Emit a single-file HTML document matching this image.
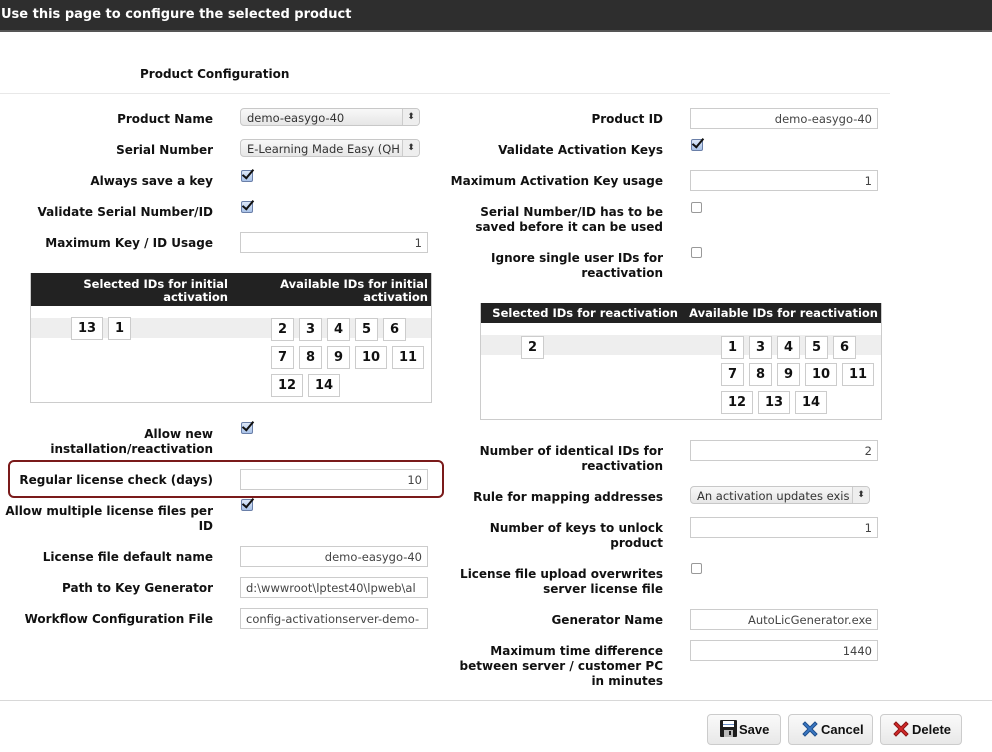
<!DOCTYPE html>
<html><head><meta charset="utf-8"><style>
*{box-sizing:border-box;margin:0;padding:0}
body{width:992px;height:752px;background:#fff;font-family:"DejaVu Sans","Liberation Sans",sans-serif;font-weight:bold;font-size:12px;color:#111;position:relative;overflow:hidden}
.a{position:absolute}
.hd{left:0;top:0;width:992px;height:32px;background:#2e2e2e;border-bottom:2px solid #555;color:#fff;font-size:13px;padding:7px 0 0 1px}
.l{text-align:right;line-height:15px;font-size:12px;margin-top:1px}
.in{position:absolute;height:21px;border:1px solid #ccc;background:#fff;font-weight:normal;font-size:11.5px;color:#444;text-align:right;padding:3px 5px;white-space:nowrap;overflow:hidden}
.sel{position:absolute;height:18px;border:1px solid #c8c8c8;border-radius:4px;background:linear-gradient(#f8f8f8,#e6e6e6);font-weight:normal;font-size:11.5px;color:#333;padding:2px 6px;white-space:nowrap;overflow:hidden}
.sel:after{content:"⬍";position:absolute;right:0;top:0;width:16px;height:16px;border-left:1px solid #ccc;font-size:9px;text-align:center;line-height:16px;background:#eee}
.cb{position:absolute;width:11px;height:11px;border:1px solid #999;border-radius:2px;background:#fff}
.ck{position:absolute;width:12px;height:12px;border:1px solid #6a7fa8;border-radius:2px;background:linear-gradient(#dde8f8,#a9c2e8)}
.ck:after{content:"";position:absolute;left:3px;top:-4px;width:4px;height:10px;border:solid #111;border-width:0 2px 2px 0;transform:rotate(40deg)}
.tb{position:absolute;border:1px solid #ccc;background:#fff}
.th{position:absolute;background:#222;color:#fff;font-size:11.5px;line-height:13px;text-align:right}
.rw{position:absolute;background:#eee}
.c{position:absolute;height:23px;border:1px solid #ccc;background:#fff;font-size:13px;text-align:center;line-height:21px}
.btn{position:absolute;top:714px;height:31px;border:1px solid #ccc;border-radius:4px;background:linear-gradient(#fafafa,#e8e8e8);font-family:"Liberation Sans",sans-serif;font-size:13px;padding-top:7px}
</style></head><body>
<div class="a hd">Use this page to configure the selected product</div>
<div class="a" style="left:140px;top:67px;font-size:12px">Product Configuration</div>
<div class="a" style="left:0;top:93px;width:890px;height:1px;background:#e8e8e8"></div>

<div class="a l" style="right:779px;top:111px">Product Name</div>
<div class="sel" style="left:240px;top:108px;width:180px">demo-easygo-40</div>
<div class="a l" style="right:779px;top:142px">Serial Number</div>
<div class="sel" style="left:240px;top:139px;width:180px">E-Learning Made Easy (QH</div>
<div class="a l" style="right:779px;top:173px">Always save a key</div>
<div class="ck" style="left:241px;top:170px"></div>
<div class="a l" style="right:779px;top:204px">Validate Serial Number/ID</div>
<div class="ck" style="left:241px;top:201px"></div>
<div class="a l" style="right:779px;top:235px">Maximum Key / ID Usage</div>
<div class="in" style="left:240px;top:232px;width:188px">1</div>

<div class="tb" style="left:30px;top:273px;width:402px;height:130px"></div>
<div class="th" style="left:31px;top:273px;width:400px;height:33px"></div>
<div class="th" style="left:60px;top:278px;width:168px">Selected IDs for initial<br>activation</div>
<div class="th" style="left:260px;top:278px;width:168px">Available IDs for initial<br>activation</div>
<div class="rw" style="left:31px;top:318px;width:400px;height:20px"></div>
<div class="c" style="left:71px;top:317px;width:32px">13</div>
<div class="c" style="left:108px;top:317px;width:23px">1</div>
<div class="c" style="left:271px;top:318px;width:23px">2</div>
<div class="c" style="left:299px;top:318px;width:23px">3</div>
<div class="c" style="left:327px;top:318px;width:23px">4</div>
<div class="c" style="left:355px;top:318px;width:23px">5</div>
<div class="c" style="left:383px;top:318px;width:23px">6</div>
<div class="c" style="left:271px;top:346px;width:23px">7</div>
<div class="c" style="left:299px;top:346px;width:23px">8</div>
<div class="c" style="left:327px;top:346px;width:23px">9</div>
<div class="c" style="left:355px;top:346px;width:32px">10</div>
<div class="c" style="left:392px;top:346px;width:32px">11</div>
<div class="c" style="left:271px;top:374px;width:32px">12</div>
<div class="c" style="left:308px;top:374px;width:32px">14</div>

<div class="a l" style="right:779px;top:426px">Allow new<br>installation/reactivation</div>
<div class="ck" style="left:241px;top:422px"></div>
<div class="a" style="left:8px;top:460px;width:436px;height:38px;border:2px solid #7a1a1a;border-radius:6px"></div>
<div class="a l" style="right:779px;top:472px">Regular license check (days)</div>
<div class="in" style="left:240px;top:469px;width:188px">10</div>
<div class="a l" style="right:779px;top:503px">Allow multiple license files per<br>ID</div>
<div class="ck" style="left:241px;top:499px"></div>
<div class="a l" style="right:779px;top:549px">License file default name</div>
<div class="in" style="left:240px;top:546px;width:188px">demo-easygo-40</div>
<div class="a l" style="right:779px;top:580px">Path to Key Generator</div>
<div class="in" style="left:240px;top:577px;width:188px;text-align:left">d:\wwwroot\lptest40\lpweb\al</div>
<div class="a l" style="right:779px;top:611px">Workflow Configuration File</div>
<div class="in" style="left:240px;top:608px;width:188px;text-align:left">config-activationserver-demo-</div>

<div class="a l" style="right:329px;top:111px">Product ID</div>
<div class="in" style="left:690px;top:108px;width:188px">demo-easygo-40</div>
<div class="a l" style="right:329px;top:142px">Validate Activation Keys</div>
<div class="ck" style="left:691px;top:139px"></div>
<div class="a l" style="right:329px;top:173px">Maximum Activation Key usage</div>
<div class="in" style="left:690px;top:170px;width:188px">1</div>
<div class="a l" style="right:329px;top:204px">Serial Number/ID has to be<br>saved before it can be used</div>
<div class="cb" style="left:691px;top:202px"></div>
<div class="a l" style="right:329px;top:250px">Ignore single user IDs for<br>reactivation</div>
<div class="cb" style="left:691px;top:247px"></div>

<div class="tb" style="left:480px;top:303px;width:402px;height:117px"></div>
<div class="th" style="left:481px;top:303px;width:400px;height:20px"></div>
<div class="th" style="left:490px;top:307px;width:188px">Selected IDs for reactivation</div>
<div class="th" style="left:680px;top:307px;width:198px">Available IDs for reactivation</div>
<div class="rw" style="left:481px;top:335px;width:400px;height:20px"></div>
<div class="c" style="left:521px;top:336px;width:23px">2</div>
<div class="c" style="left:721px;top:336px;width:23px">1</div>
<div class="c" style="left:749px;top:336px;width:23px">3</div>
<div class="c" style="left:777px;top:336px;width:23px">4</div>
<div class="c" style="left:805px;top:336px;width:23px">5</div>
<div class="c" style="left:833px;top:336px;width:23px">6</div>
<div class="c" style="left:721px;top:363px;width:23px">7</div>
<div class="c" style="left:749px;top:363px;width:23px">8</div>
<div class="c" style="left:777px;top:363px;width:23px">9</div>
<div class="c" style="left:805px;top:363px;width:32px">10</div>
<div class="c" style="left:842px;top:363px;width:32px">11</div>
<div class="c" style="left:721px;top:391px;width:32px">12</div>
<div class="c" style="left:758px;top:391px;width:32px">13</div>
<div class="c" style="left:795px;top:391px;width:32px">14</div>

<div class="a l" style="right:329px;top:443px">Number of identical IDs for<br>reactivation</div>
<div class="in" style="left:690px;top:440px;width:188px">2</div>
<div class="a l" style="right:329px;top:489px">Rule for mapping addresses</div>
<div class="sel" style="left:690px;top:486px;width:180px">An activation updates exis</div>
<div class="a l" style="right:329px;top:520px">Number of keys to unlock<br>product</div>
<div class="in" style="left:690px;top:517px;width:188px">1</div>
<div class="a l" style="right:329px;top:566px">License file upload overwrites<br>server license file</div>
<div class="cb" style="left:691px;top:563px"></div>
<div class="a l" style="right:329px;top:612px">Generator Name</div>
<div class="in" style="left:690px;top:609px;width:188px">AutoLicGenerator.exe</div>
<div class="a l" style="right:329px;top:643px">Maximum time difference<br>between server / customer PC<br>in minutes</div>
<div class="in" style="left:690px;top:640px;width:188px">1440</div>

<div class="a" style="left:0;top:700px;width:992px;height:1px;background:#d8d8d8"></div>
<div class="btn" style="left:707px;width:74px;padding-left:13px"><svg width="17" height="17" viewBox="0 0 17 17" style="position:absolute;left:12px;top:5px"><rect x="0" y="0" width="17" height="17" rx="1" fill="#1e1e1e"/><rect x="3" y="1" width="11" height="6" fill="#fff"/><rect x="3" y="4" width="11" height="1" fill="#6a8fc8"/><rect x="4" y="10" width="9" height="7" fill="#bbb"/><rect x="9" y="11" width="2" height="4" fill="#1e1e1e"/></svg><span style="margin-left:18px">Save</span></div>
<div class="btn" style="left:788px;width:85px"><svg width="18" height="18" viewBox="0 0 18 18" style="position:absolute;left:12px;top:5px"><path d="M2 4L4 2L9 7L14 2L16 4L11 9L16 14L14 16L9 11L4 16L2 14L7 9Z" fill="#3b78c4" stroke="#1e4f8c" stroke-width="1"/></svg><span style="margin-left:32px">Cancel</span></div>
<div class="btn" style="left:880px;width:82px"><svg width="18" height="18" viewBox="0 0 18 18" style="position:absolute;left:11px;top:5px"><path d="M2 4L4 2L9 7L14 2L16 4L11 9L16 14L14 16L9 11L4 16L2 14L7 9Z" fill="#d42a2a" stroke="#8c1414" stroke-width="1"/></svg><span style="margin-left:31px">Delete</span></div>
</body></html>
